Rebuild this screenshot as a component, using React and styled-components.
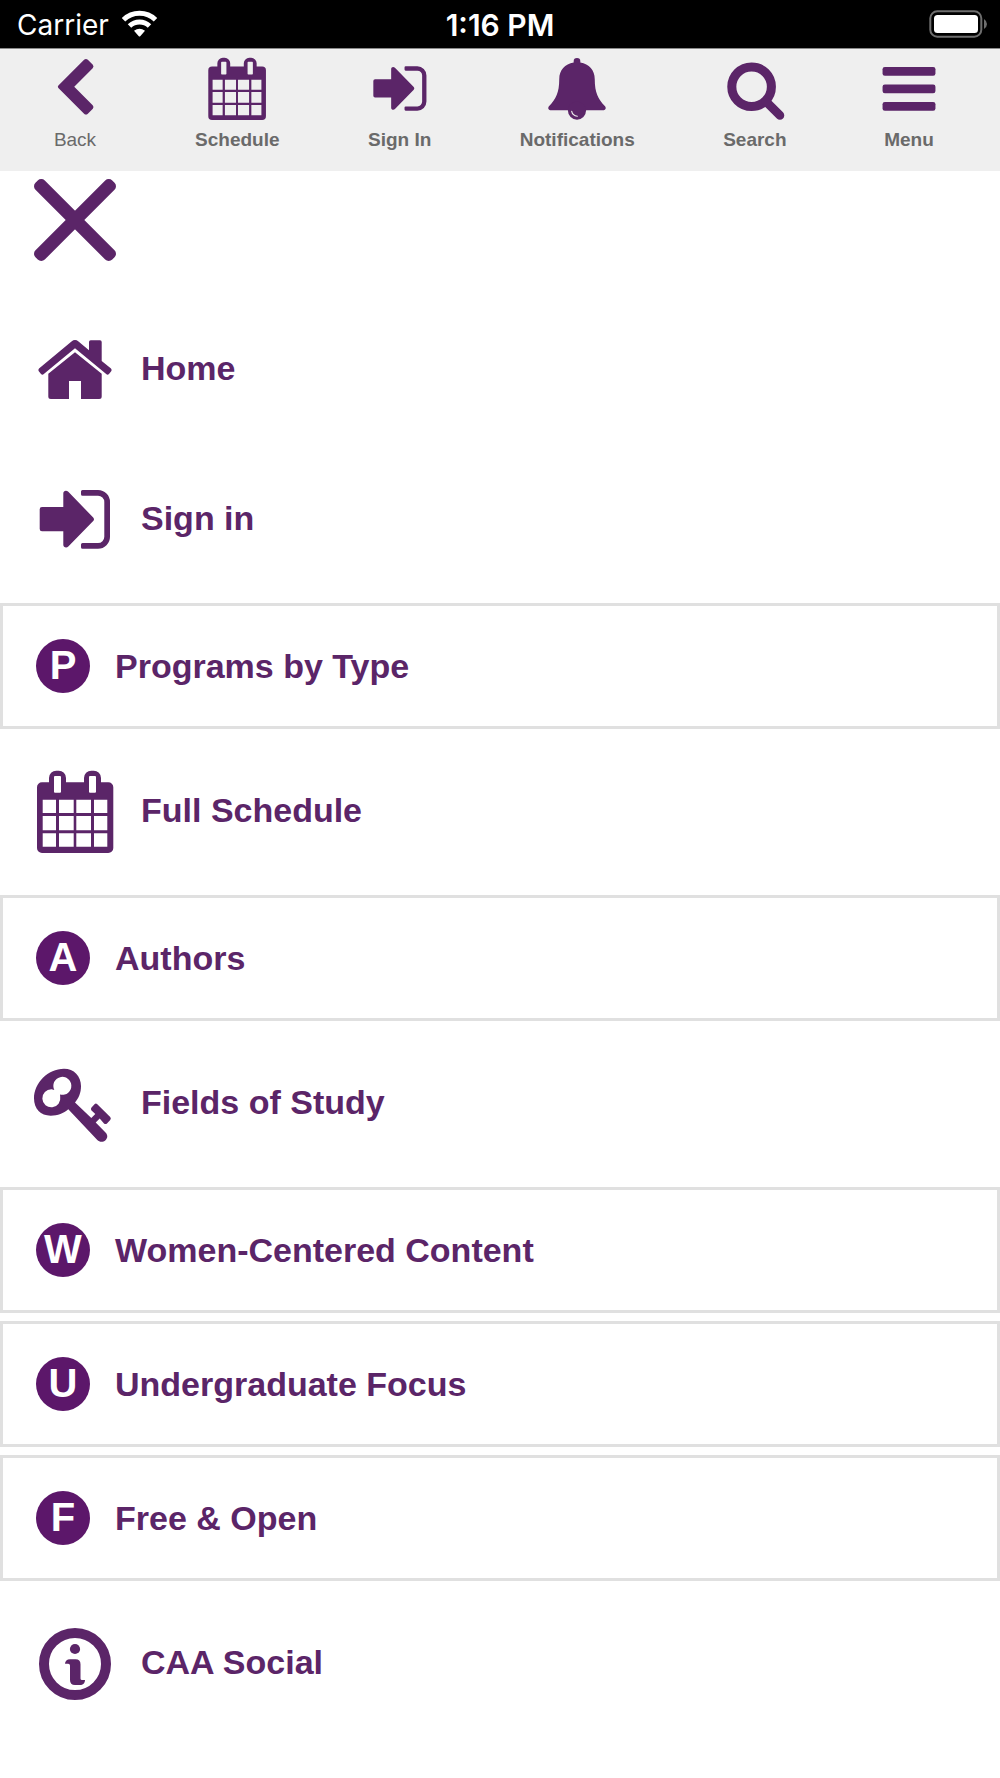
import React from "react";
import styled, { createGlobalStyle, css } from "styled-components";

const purple = "#5b2568";
const badgePurple = "#5c176a";

const GlobalStyle = createGlobalStyle`
  *, *::before, *::after { box-sizing: border-box; }
  body {
    margin: 0;
    background: #fff;
    font-family: "Liberation Sans", Arial, sans-serif;
  }
`;

const Page = styled.div`
  min-height: 100vh;
  background: #fff;
`;

const StatusBar = styled.header`
  display: grid;
  grid-template-columns: 1fr auto 1fr;
  align-items: center;
  height: 49px;
  padding: 0 13px;
  border-bottom: 1px solid #8a8a8a;
  background: #000;
  color: #fff;
  font-family: Inter, Roboto, sans-serif;
`;

const Carrier = styled.div`
  display: flex;
  align-items: center;
  gap: 12px;
  padding-left: 4px;
  font-size: 28px;
`;

const CarrierName = styled.span`
  padding-top: 2px;
  line-height: 46px;
`;

const Clock = styled.time`
  padding-top: 2px;
  font-size: 30px;
  line-height: 46px;
  font-weight: 600;
`;

const Battery = styled.svg`
  justify-self: end;
`;

const Toolbar = styled.nav`
  display: flex;
  justify-content: space-between;
  align-items: flex-start;
  height: 122px;
  padding: 6px 57px 0 41px;
  background: #efefef;
`;

const ToolButton = styled.button`
  display: flex;
  flex-direction: column;
  align-items: center;
  gap: 6px;
  padding: 0;
  border: 0;
  background: none;
  color: #6a6a6a;
  font-family: inherit;
  font-size: 19px;
  font-weight: ${(p) => (p.$light ? 400 : 700)};
  line-height: 22px;
  cursor: pointer;
`;

const Icon = styled.svg`
  display: block;
  flex: none;
  width: ${(p) => p.$size}px;
  height: ${(p) => p.$size}px;
  fill: ${purple};
`;

const CloseButton = styled.button`
  display: block;
  margin: 4px 30px 30px;
  padding: 0;
  border: 0;
  background: none;
  cursor: pointer;
`;

const MenuList = styled.ul`
  margin: 0;
  padding: 0;
  list-style: none;
`;

const MenuItem = styled.li`
  ${(p) =>
    p.$boxed &&
    css`
      margin: 8px 0;
      border: 3px solid #e0e0e0;
    `}
`;

const MenuLink = styled.a`
  display: flex;
  align-items: center;
  gap: ${(p) => (p.$boxed ? 25 : 21)}px;
  height: ${(p) => (p.$boxed ? 120 : 150)}px;
  padding: 0 ${(p) => (p.$boxed ? 33 : 30)}px;
  color: ${purple};
  font-size: 34px;
  font-weight: 700;
  line-height: 40px;
  text-decoration: none;
`;

const Label = styled.span`
  padding-bottom: ${(p) => (p.$raised ? 5 : 0)}px;
`;

const Badge = styled.span`
  display: flex;
  justify-content: center;
  flex: none;
  width: 54px;
  height: 54px;
  border-radius: 50%;
  background: ${badgePurple};
  color: #fff;
  font-size: 40px;
  line-height: 52px;
`;

const columns = [[12.7, 13.3], [29, 14.7], [46.3, 14.7], [64, 13.3]];
const lines = [[32.7, 13.3], [49, 14.3], [66.3, 13.4]];
const cells = lines
  .map(([y, h]) => columns.map(([x, w]) => `M${x} ${y}h${w}v${h}h${-w}Z`).join(""))
  .join("");

const shapes = {
  back: (
    <path d="M57 6.4 Q59.500 4 62 6.400 L68.600 13 Q70.500 15.300 68.400 17.600 L44 42 L68.400 66.400 Q70.500 68.700 68.600 71 L62 77.600 Q59.500 80 57 77.600 L23 43.600 Q21.500 42 23 40.400 Z" />
  ),
  calendar: (
    <path
      fillRule="evenodd"
      d={
        "M12 15.300H19V11A7.300 7.300 0 0 1 26.300 3.700H28.700A7.300 7.300 0 0 1 36 11V15.300H54V11A7.300 7.300 0 0 1 61.300 3.700H63.700A7.300 7.300 0 0 1 71 11V15.300H78.300A5 5 0 0 1 83.300 20.300V81A5 5 0 0 1 78.300 86H12A5 5 0 0 1 7 81V20.300A5 5 0 0 1 12 15.300Z" +
        "M25 9H30Q31 9 31 10V24.700Q31 25.700 30 25.700H25Q24 25.700 24 24.700V10Q24 9 25 9Z" +
        "M60 9H65Q66 9 66 10V24.700Q66 25.700 65 25.700H60Q59 25.700 59 24.700V10Q59 9 60 9Z" +
        cells
      }
    />
  ),
  signIn: (
    <>
      <path d="M12 32H33.300V18.500C33.300 15.500 36.500 15 38.300 16.800L63.200 42.500Q64.800 44.300 63.200 46.100L38.300 71.600C36.500 73.400 33.300 72.500 33.300 69.800V56.300H12Q9.700 56.300 9.700 54V34.300Q9.700 32 12 32Z" />
      <path d="M52.500 15H68A12 12 0 0 1 80 27V61.700A12 12 0 0 1 68 73.700H52.500Q51 73.700 51 72.200V69.500Q51 68 52.500 68H68A6.300 6.300 0 0 0 74.300 61.700V27A6.300 6.300 0 0 0 68 20.700H52.500Q51 20.700 51 19.200V16.500Q51 15 52.500 15Z" />
    </>
  ),
  bell: (
    <>
      <path d="M40.600 10V8.400A4.400 4.400 0 0 1 49.400 8.400V10C61 12 68.500 20 68.500 32C68.500 50 73 58 81.800 67.500C84.500 70.500 82.500 73.200 79 73.200H11C7.500 73.200 5.500 70.500 8.200 67.500C17 58 21.500 50 21.500 32C21.500 20 29 12 40.600 10Z" />
      <circle cx="45" cy="73.600" r="12" />
      <path d="M38 74.500Q39 80 45.500 81" fill="none" stroke="#efefef" strokeWidth="1.500" strokeLinecap="round" />
    </>
  ),
  search: (
    <>
      <circle cx="40.500" cy="42" r="26.200" fill="none" stroke={purple} strokeWidth="12" />
      <path d="M59 61L78 80" stroke={purple} strokeWidth="11.500" strokeLinecap="round" />
    </>
  ),
  menu: (
    <>
      <rect x="10" y="16" width="70" height="11.600" rx="3" />
      <rect x="10" y="39" width="70" height="11.600" rx="3" />
      <rect x="10" y="62.200" width="70" height="11.600" rx="3" />
    </>
  ),
  close: (
    <>
      <rect x="38.400" y="-9.300" width="13.200" height="108.600" rx="5" transform="rotate(45 45 45)" />
      <rect x="38.400" y="-9.300" width="13.200" height="108.600" rx="5" transform="rotate(-45 45 45)" />
    </>
  ),
  home: (
    <>
      <path d="M41.500 16.500Q45 13.700 48.500 16.500L59 25.300V17Q59 15.300 60.700 15.300H70Q71.700 15.300 71.700 17V36L81 43.600Q82.300 45 81.200 46.300L79 49Q77.600 50.200 76.200 49.100L45 23.300L13.800 49.100Q12.400 50.200 11 49L8.800 46.300Q7.700 45 9 43.600Z" />
      <path d="M45 27.300L71.700 48.700V71.500Q71.700 74 69.200 74H51V56H39V74H20.800Q18.300 74 18.300 71.500V48.700Z" />
    </>
  ),
  key: (
    <path
      fillRule="evenodd"
      d="M34 9.700C44 9.700 51 17 51 27C51 34 48.700 39 45 43.500L61.300 59L65.300 54.900L61.500 51.500Q60.200 50 61.500 48.500L64.500 45.200Q65.900 43.800 67.300 45.200L80.200 58Q81.500 59.500 80.200 61L77 64.400Q75.500 65.600 74 64.400L69.700 59.600L65.700 63.500L75.500 73.500C78.300 76.500 77.500 79.300 75.500 81.200C73 83.500 69.500 83.300 67.300 81L38.300 50.300C33.500 54.200 28 56.700 20.700 56.700C10.700 56.700 4 50 4 39.300C4 24 18 9.700 34 9.700ZM24.300 30.900A9 9 0 1 1 30.700 35.700L30 35.300L30.200 37.700A9 9 0 1 1 21.500 30.300Z"
    />
  ),
  info: (
    <>
      <circle cx="45" cy="45" r="31" fill="none" stroke={purple} strokeWidth="10" />
      <circle cx="45" cy="30" r="5.100" />
      <path d="M35 44.700C35 42 37 40.200 40 40.200H45.500Q50.500 40.200 50.500 45.200V59.500Q50.500 61 52 61H55C55 64 53 66 50 66H45Q40 66 40 61V46.500Q40 44.700 38.200 44.700Z" />
    </>
  ),
};

const Glyph = ({ name, size = 90 }) => (
  <Icon $size={size} viewBox="0 0 90 90" aria-hidden="true">
    {shapes[name]}
  </Icon>
);

const tools = [
  { icon: "back", label: "Back", light: true },
  { icon: "calendar", label: "Schedule" },
  { icon: "signIn", label: "Sign In" },
  { icon: "bell", label: "Notifications" },
  { icon: "search", label: "Search" },
  { icon: "menu", label: "Menu" },
];

const items = [
  { icon: "home", label: "Home" },
  { icon: "signIn", label: "Sign in" },
  { badge: "P", label: "Programs by Type" },
  { icon: "calendar", label: "Full Schedule" },
  { badge: "A", label: "Authors" },
  { icon: "key", label: "Fields of Study" },
  { badge: "W", label: "Women-Centered Content" },
  { badge: "U", label: "Undergraduate Focus" },
  { badge: "F", label: "Free & Open" },
  { icon: "info", label: "CAA Social" },
];

export default function App() {
  return (
    <Page>
      <GlobalStyle />
      <StatusBar>
        <Carrier>
          <CarrierName>Carrier</CarrierName>
          <svg width="37" height="28" viewBox="0 0 37 28" fill="none" aria-hidden="true">
            <path d="M2.500 9.800A23 23 0 0 1 34.500 9.800" stroke="#fff" strokeWidth="5" />
            <path d="M8.500 16A14.500 14.500 0 0 1 28.500 16" stroke="#fff" strokeWidth="5" />
            <path d="M13 20.800Q18.500 16.500 24 20.800L19.200 26.200Q18.500 27 17.800 26.200Z" fill="#fff" />
          </svg>
        </Carrier>
        <Clock>1:16 PM</Clock>
        <Battery width="58" height="28" viewBox="0 0 58 28" aria-hidden="true">
          <rect x="1.300" y="1.300" width="51" height="25.400" rx="7" fill="none" stroke="#6e6e6e" strokeWidth="2" />
          <rect x="5" y="5" width="44" height="18" rx="3.500" fill="#fff" />
          <path d="M55 9Q58 11 58 14T55 19Z" fill="#6e6e6e" />
        </Battery>
      </StatusBar>
      <Toolbar aria-label="Main">
        {tools.map((t) => (
          <ToolButton key={t.label} type="button" $light={t.light}>
            <Glyph name={t.icon} size={68} />
            {t.label}
          </ToolButton>
        ))}
      </Toolbar>
      <CloseButton type="button" aria-label="Close menu">
        <Glyph name="close" />
      </CloseButton>
      <MenuList>
        {items.map((item) => {
          const boxed = Boolean(item.badge);
          return (
            <MenuItem key={item.label} $boxed={boxed}>
              <MenuLink href="#" $boxed={boxed}>
                {boxed ? <Badge aria-hidden="true">{item.badge}</Badge> : <Glyph name={item.icon} />}
                <Label $raised={!boxed}>{item.label}</Label>
              </MenuLink>
            </MenuItem>
          );
        })}
      </MenuList>
    </Page>
  );
}
